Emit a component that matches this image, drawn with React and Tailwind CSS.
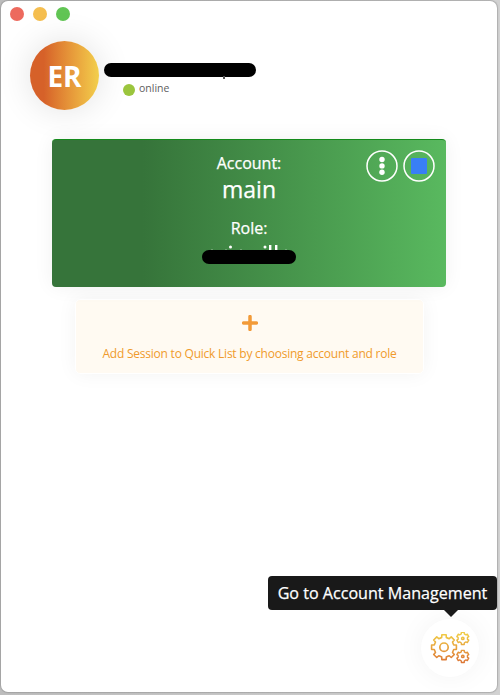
import React from "react";

function gearPath(cx, cy, teeth, outer, root) {
  const step = (Math.PI * 2) / teeth;
  const point = (r, a) => `${(cx + r * Math.sin(a)).toFixed(2)} ${(cy - r * Math.cos(a)).toFixed(2)}`;
  let d = "";
  for (let i = 0; i < teeth; i++) {
    const a = i * step;
    d += `${i === 0 ? "M" : "L"}${point(root, a - step * 0.3)}`;
    d += `L${point(outer, a - step * 0.22)}`;
    d += `L${point(outer, a + step * 0.22)}`;
    d += `L${point(root, a + step * 0.3)}`;
    d += `Q${point(root - 0.2, a + step * 0.5)} ${point(root, a + step * 0.7)}`;
  }
  return d + "Z";
}

function Gears() {
  return (
    <svg width="42" height="32" viewBox="0 0 42 32" fill="none" stroke="url(#gears)" strokeLinejoin="round">
      <defs>
        <linearGradient id="gears" gradientUnits="userSpaceOnUse" x1="0" y1="2" x2="0" y2="30">
          <stop offset="0" stopColor="#f0cb45" />
          <stop offset="1" stopColor="#dd7736" />
        </linearGradient>
      </defs>
      <path d={gearPath(15, 15.2, 8, 12.6, 10)} strokeWidth="1.6" />
      <circle cx="15" cy="15.2" r="4.2" strokeWidth="1.7" />
      <path d={gearPath(33.8, 6.4, 6, 6.2, 4.8)} strokeWidth="1.4" />
      <circle cx="33.8" cy="6.4" r="1.2" strokeWidth="1.5" />
      <path d={gearPath(33.8, 24.4, 6, 6.2, 4.8)} strokeWidth="1.4" />
      <circle cx="33.8" cy="24.4" r="1.2" strokeWidth="1.5" />
    </svg>
  );
}

function Header() {
  return (
    <header className="flex h-[70px] pl-[29px]">
      <div className="flex size-[69px] shrink-0 items-center justify-center rounded-full bg-linear-to-r from-[#d66129] from-20% to-[#f2cf4c] text-[28px] font-bold text-white shadow-[0_0_35px_rgba(0,0,0,0.12)]">
        <span>ER</span>
      </div>
      <div className="ml-[5px] flex flex-col pt-[22px]">
        <div className="relative h-[14px] w-[152px] rounded-full bg-black">
          <i className="absolute top-[13px] left-[119px] h-[3px] w-[2px] bg-[#555]" />
        </div>
        <div className="mt-[3px] ml-[19px] flex items-center gap-[4px]">
          <i className="mt-[3px] size-[12px] rounded-full bg-[#9bc53d]" />
          <span className="text-[10.5px] leading-[16px] text-[#606060]">online</span>
        </div>
      </div>
    </header>
  );
}

function SessionCard() {
  return (
    <section className="relative ml-[51px] flex h-[148px] w-[394px] flex-col items-center rounded-[4px] border-t border-[#148a1b] bg-linear-to-r from-[#36743a] from-23% to-[#59b95f] text-white shadow-[0_0_20px_rgba(0,0,0,0.06)]">
      <p className="mt-[11px] text-[16px] leading-[24px] [-webkit-text-stroke:0.25px_white]">Account:</p>
      <p className="text-[23px] leading-[29px] [-webkit-text-stroke:0.25px_white]">main</p>
      <p className="mt-[12px] text-[16px] leading-[24px] [-webkit-text-stroke:0.25px_white]">Role:</p>
      <svg className="mt-[4px]" width="94" height="6" viewBox="202 244 94 6" fill="#fff">
        <circle cx="230.5" cy="247" r="1.5" />
        <circle cx="265" cy="247" r="1.5" />
        <rect x="269" y="245" width="2.4" height="5" />
        <rect x="275" y="245" width="2.4" height="5" />
        <g opacity="0.25">
          <rect x="211" y="249" width="2" height="1" />
          <rect x="225" y="249" width="2" height="1" />
          <rect x="240" y="249" width="2" height="1" />
          <rect x="285" y="249" width="2" height="1" />
        </g>
      </svg>
      <div className="h-[14px] w-[94px] rounded-full bg-black" />
      <div className="absolute top-[10px] right-[11px] flex gap-[5px]">
        <button className="flex size-8 items-center justify-center">
          <svg width="32" height="32" viewBox="0 0 32 32" fill="white">
            <circle cx="16" cy="16" r="15" fill="none" stroke="white" strokeWidth="1.5" />
            <circle cx="16" cy="9.5" r="2.7" />
            <circle cx="16" cy="15.9" r="2.7" />
            <circle cx="16" cy="22.3" r="2.7" />
          </svg>
        </button>
        <button className="flex size-8 items-center justify-center">
          <svg width="32" height="32" viewBox="0 0 32 32">
            <circle cx="16" cy="16" r="15" fill="none" stroke="white" strokeWidth="1.5" />
            <rect x="8" y="8" width="16" height="16" rx="1" fill="#397ff5" />
          </svg>
        </button>
      </div>
    </section>
  );
}

export default function App() {
  return (
    <div className="h-[695px] w-[500px] bg-linear-to-r from-[#bdbdbd] to-[#d2d2d2] pt-px pl-px font-['Open_Sans',sans-serif]">
      <main className="relative flex h-[691px] w-[496px] flex-col rounded-[7px] bg-white shadow-[0_0_1px_1px_rgba(130,130,130,0.45)]">
        <div className="flex h-[40px] gap-[9px] pt-[6px] pl-[9px]">
          <i className="size-[14px] rounded-full bg-[#ed6a5e]" />
          <i className="size-[14px] rounded-full bg-[#f5be4f]" />
          <i className="size-[14px] rounded-full bg-[#61c554]" />
        </div>
        <Header />
        <div className="h-[28px]" />
        <SessionCard />
        <section className="mt-[12px] ml-[74px] flex h-[75px] w-[349px] flex-col items-center rounded-[5px] border border-white bg-[#fffaf2] shadow-[0_0_20px_rgba(0,0,0,0.05)]">
          <svg className="mt-[15px]" width="16" height="16" viewBox="0 0 16 16" stroke="#f29a38" strokeWidth="3.5" strokeLinecap="round">
            <path d="M8 1.6V14.4M1.6 8H14.4" />
          </svg>
          <p className="mt-[14px] text-[12px] leading-[18px] tracking-[-0.23px] whitespace-nowrap text-[#f09a2c]">Add Session to Quick List by choosing account and role</p>
        </section>
        <div className="mt-auto mr-[18px] mb-[15px] flex size-[58px] items-center justify-center self-end rounded-full bg-white shadow-[0_0_28px_rgba(0,0,0,0.05)]">
          <Gears />
        </div>
        <div className="absolute top-[575px] left-[267px] flex h-[34px] w-[229px] items-center justify-center rounded-[4px] bg-[#191919] pt-px text-[16.1px] whitespace-nowrap text-white [-webkit-text-stroke:0.25px_white]">
          Go to Account Management
          <svg className="absolute top-[33px] left-[175px]" width="16" height="8" viewBox="0 0 16 8" fill="#191919">
            <path d="M0 0H16L8 8Z" />
          </svg>
        </div>
      </main>
    </div>
  );
}
